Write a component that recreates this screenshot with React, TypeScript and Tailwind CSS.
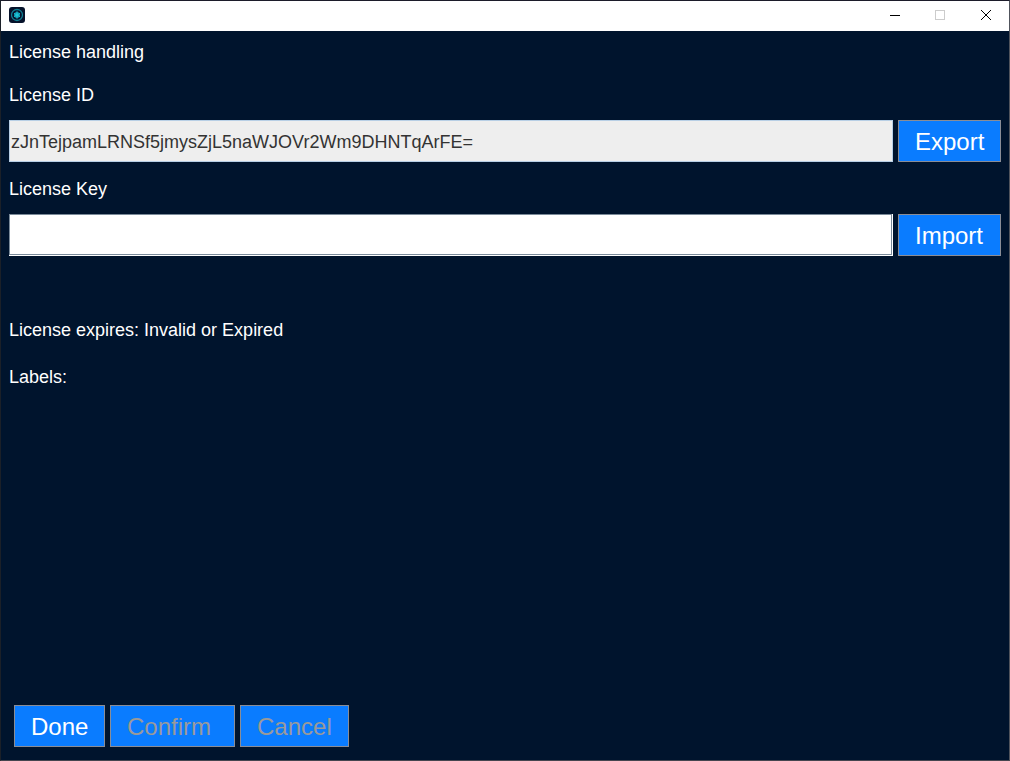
import React, { useState } from 'react';

const buttonClass =
  'h-[42px] shrink-0 border border-[#8a8d96] bg-[#0a7cff] px-4 pt-0.5 text-left text-2xl text-white disabled:text-[#9a9a9a]';

const AppIcon = () => (
  <svg width="16" height="16" viewBox="0 0 16 16" aria-hidden="true">
    <rect width="16" height="16" rx="3" fill="#06122a" />
    <circle cx="8" cy="8" r="5.5" fill="none" stroke="#117f93" strokeWidth="1.3" />
    <path d="M8 4.6l3 1.7v3.4l-3 1.7-3-1.7V6.3z" fill="#0f8ea5" />
    <path d="M8 4.5v7M5 6.2l6 3.6M11 6.2L5 9.8" stroke="#19b9cc" strokeWidth="0.9" />
    <circle cx="8" cy="8" r="1.7" fill="#1cc3d6" />
  </svg>
);

const TitleBar = () => (
  <header className="flex h-[30px] items-start bg-white pl-2">
    <div className="pt-1.5">
      <AppIcon />
    </div>
    <div className="ml-auto flex h-7">
      <button type="button" aria-label="Minimize" className="flex w-[45px] items-center justify-center">
        <svg width="10" height="10" viewBox="0 0 10 10" shapeRendering="crispEdges">
          <path d="M0 5h10v1H0z" fill="#000" />
        </svg>
      </button>
      <button type="button" aria-label="Maximize" disabled className="flex w-[46px] items-center justify-center">
        <svg width="10" height="10" viewBox="0 0 10 10">
          <rect x="0.5" y="0.5" width="9" height="9" fill="none" stroke="#ccc" />
        </svg>
      </button>
      <button type="button" aria-label="Close" className="flex w-[46px] items-center justify-center">
        <svg width="10" height="10" viewBox="0 0 10 10">
          <path d="M0 0l10 10M10 0L0 10" stroke="#000" strokeWidth="1" />
        </svg>
      </button>
    </div>
  </header>
);

const App = () => {
  const [licenseKey, setLicenseKey] = useState('');

  return (
    <div className="flex min-h-screen flex-col border border-t-[#1c1c2a] border-r-[#50545c] border-b-[#45454f] border-l-[#1b2028] bg-[#00142d] font-['Liberation_Sans',Arial,sans-serif] text-lg/6 text-white">
      <TitleBar />

      <main className="flex flex-1 flex-col px-2 pt-2 pb-[13px]">
        <h1 className="mt-px">License handling</h1>

        <label htmlFor="license-id" className="mt-[19px]">
          License ID
        </label>
        <div className="mt-[13px] flex gap-[5px]">
          <input
            id="license-id"
            type="text"
            readOnly
            value="zJnTejpamLRNSf5jmysZjL5naWJOVr2Wm9DHNTqArFE="
            className="h-[42px] min-w-0 flex-1 border border-[#b8cfe5] bg-[#eee] px-px pt-0.5 text-[#333]"
          />
          <button type="button" className={`${buttonClass} w-[103px]`}>
            Export
          </button>
        </div>

        <label htmlFor="license-key" className="mt-[15px]">
          License Key
        </label>
        <div className="mt-[13px] flex gap-[5px]">
          {/* outer wrapper gives the white edge on the right and bottom */}
          <div className="flex h-[42px] min-w-0 flex-1 border-r border-b border-white bg-white">
            <input
              id="license-key"
              type="text"
              value={licenseKey}
              onChange={(e) => setLicenseKey(e.target.value)}
              className="min-w-0 flex-1 border border-[#7a8a99] bg-white px-px pt-0.5 text-[#333] outline-none"
            />
          </div>
          <button type="button" className={`${buttonClass} w-[103px]`}>
            Import
          </button>
        </div>

        <p className="mt-[62px]">License expires: Invalid or Expired</p>
        <p className="mt-[23px]">Labels:</p>

        <div className="mt-auto flex gap-[5px] pl-[5px]">
          <button type="button" className={`${buttonClass} w-[91px]`}>
            Done
          </button>
          <button type="button" disabled className={`${buttonClass} w-[125px]`}>
            Confirm
          </button>
          <button type="button" disabled className={`${buttonClass} w-[109px]`}>
            Cancel
          </button>
        </div>
      </main>
    </div>
  );
};

export default App;
